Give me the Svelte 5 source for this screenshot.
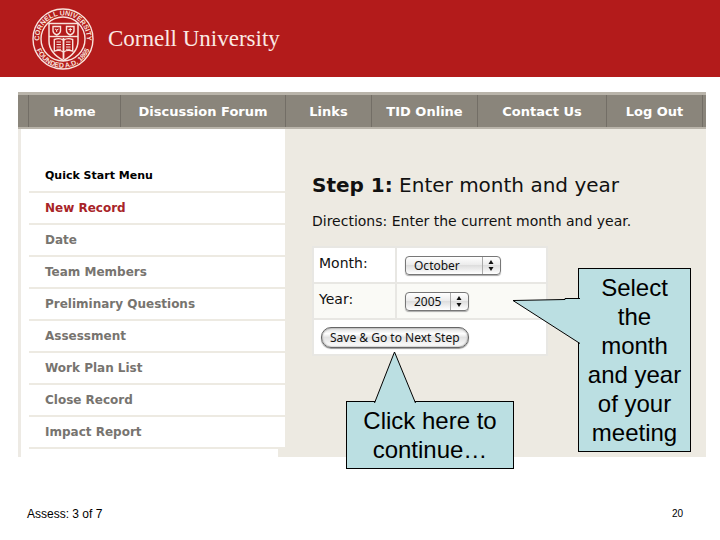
<script>
  const links = [
    { label: 'Home', share: 92 },
    { label: 'Discussion Forum', share: 165 },
    { label: 'Links', share: 86 },
    { label: 'TID Online', share: 106 },
    { label: 'Contact Us', share: 129 },
    { label: 'Log Out', share: 96 }
  ];
  const steps = [
    'New Record',
    'Date',
    'Team Members',
    'Preliminary Questions',
    'Assessment',
    'Work Plan List',
    'Close Record',
    'Impact Report'
  ];
  let current = $state('New Record');
  let month = $state('October');
  let year = $state('2005');
  const months = ['January', 'February', 'March', 'April', 'May', 'June', 'July', 'August', 'September', 'October', 'November', 'December'];
  const years = ['2004', '2005', '2006'];
</script>

{#snippet stepper()}
  <svg class="stepper" width="18" height="17" viewBox="0 0 18 17" aria-hidden="true">
    <path d="M.5 0V17" stroke="#aaa" />
    <path d="M9 3l2.5 4h-5zM9 14l2.5-4h-5z" fill="#111" />
  </svg>
{/snippet}

<div class="slide">
  <header>
    <svg class="seal" width="62" height="62" viewBox="0 0 62 62" fill="none" stroke="#f9e3dc" aria-hidden="true">
      <defs>
        <path id="arc-top" d="M9.5 41A23.7 23.7 0 1 1 52.5 41" />
        <path id="arc-bottom" d="M3 37A28.6 28.6 0 0 0 59 37" />
      </defs>
      <circle cx="31" cy="31" r="30" stroke-width="1.4" />
      <circle cx="31" cy="31" r="22" stroke-width="1.4" />
      <g class="motto" fill="#f9e3dc" stroke="none">
        <text text-anchor="middle"><textPath href="#arc-top" startOffset="50%">CORNELL UNIVERSITY</textPath></text>
        <text text-anchor="middle"><textPath href="#arc-bottom" startOffset="50%">FOUNDED A.D. 1865</textPath></text>
      </g>
      <path d="M17 15.5h29V33c0 9-5 14.5-14.5 19.5C22 47.5 17 42 17 33z" stroke-width="1.5" />
      <path d="M17 28.5h29" stroke-width="1.4" />
      <path d="M21 18.5h7.5v4.5c0 2-1.5 3-3.75 4-2.25-1-3.75-2-3.75-4zM34.5 18.5H42v4.5c0 2-1.5 3-3.75 4-2.25-1-3.75-2-3.75-4z" stroke-width="1.4" />
      <path d="M23 21l1.7 1 1.8-1M24.7 22v2M36.5 21.5h3.5M38.25 20v4" />
      <path d="M22.3 31.5c3.5-1.3 6.7-1 9.2.7 2.5-1.7 5.7-2 9.2-.7V43c-3.5-1-6.7-.7-9.2 1-2.5-1.7-5.7-2-9.2-1z" stroke-width="1.4" />
      <path d="M31.5 30v21" stroke-width="1.8" />
      <path d="M24.5 34H29M24.5 36.5H29M24.5 39H29M24.5 41.3H29M34 34h4.5M34 36.5h4.5M34 39h4.5M34 41.3h4.5" />
    </svg>
    <span class="brand">Cornell University</span>
  </header>

  <div class="site">
    <nav style:grid-template-columns={`10px ${links.map((l) => l.share + 'fr').join(' ')} 4px`}>
      <span></span>
      {#each links as link}
        <a href="#top">{link.label}</a>
      {/each}
      <span class="end"></span>
    </nav>

    <div class="columns">
      <aside>
        <h2>Quick Start Menu</h2>
        <ul>
          {#each steps as step}
            <li>
              <a href="#step" class:current={step === current} onclick={() => (current = step)}>{step}</a>
            </li>
          {/each}
        </ul>
        <div class="tail"></div>
      </aside>

      <main>
        <h1><strong>Step 1:</strong> Enter month and year</h1>
        <p class="directions">Directions: Enter the current month and year.</p>
        <form onsubmit={(e) => e.preventDefault()}>
          <table>
            <tbody>
              <tr>
                <th><label for="month">Month:</label></th>
                <td>
                  <span class="picker month">
                    <select id="month" bind:value={month}>
                      {#each months as m}<option>{m}</option>{/each}
                    </select>
                    {@render stepper()}
                  </span>
                </td>
              </tr>
              <tr class="alt">
                <th><label for="year">Year:</label></th>
                <td>
                  <span class="picker year">
                    <select id="year" bind:value={year}>
                      {#each years as y}<option>{y}</option>{/each}
                    </select>
                    {@render stepper()}
                  </span>
                </td>
              </tr>
              <tr>
                <td class="action" colspan="2"><button type="submit">Save &amp; Go to Next Step</button></td>
              </tr>
            </tbody>
          </table>
        </form>

        <div class="callout continue">
          <svg width="42" height="52" viewBox="0 0 42 52" aria-hidden="true">
            <path d="M.5 52L20.5 1L41.5 52" fill="#bbdfe2" stroke="#000" />
          </svg>
          Click here to continue…
        </div>
        <div class="callout select">
          <svg width="68" height="48" viewBox="0 0 68 48" aria-hidden="true">
            <path d="M68 1.5H53V2.5L1 3.5L68 46.5" fill="#bbdfe2" stroke="#000" />
          </svg>
          Select the month and year of your meeting
        </div>
      </main>
    </div>
  </div>

  <footer>
    <span>Assess: 3 of 7</span>
    <span class="page">20</span>
  </footer>
</div>

<style>
  :global(body) {
    margin: 0;
    background: #fff;
  }
  .slide {
    font-family: 'DejaVu Sans', Verdana, sans-serif;
    color: #111;
  }
  header {
    display: flex;
    align-items: center;
    gap: 14px;
    height: 77px;
    padding-left: 32px;
    background: #b31b1b;
  }
  .motto {
    font: bold 7px 'Liberation Sans', Arial, sans-serif;
  }
  .brand {
    font: 23px 'Liberation Serif', 'Times New Roman', serif;
    color: #fbe9e4;
  }
  .site {
    margin: 15px 14px 0 18px;
  }
  nav {
    display: grid;
    height: 32px;
    border-top: 3px solid #b9b4aa;
    border-bottom: 2px solid #b9b4aa;
    background: #8a857b;
  }
  nav a {
    display: flex;
    align-items: center;
    justify-content: center;
    border-left: 1px solid #736e66;
    font-size: 13px;
    font-weight: bold;
    white-space: nowrap;
    color: #fff;
    text-decoration: none;
  }
  nav .end {
    border-left: 1px solid #736e66;
  }
  .columns {
    display: grid;
    grid-template-columns: 267px 1fr;
    background: #edeae2;
  }
  aside {
    padding-top: 32px;
    border-left: 3px solid #edeae4;
    background: linear-gradient(#fff, #fff) no-repeat 0 0 / 100% calc(100% - 8px);
  }
  aside h2 {
    margin: 0 0 0 8px;
    padding-left: 16px;
    border-bottom: 2px solid #edeae2;
    font-size: 11px;
    line-height: 30px;
    color: #000;
  }
  ul {
    margin: 0 0 0 8px;
    padding: 0;
    list-style: none;
  }
  li {
    padding-left: 16px;
    border-bottom: 2px solid #edeae2;
    font-size: 12px;
    font-weight: bold;
    line-height: 30px;
  }
  li a {
    color: #77746f;
    text-decoration: none;
  }
  li a.current {
    color: #a82428;
  }
  .tail {
    height: 8px;
    margin-right: 7px;
    background: #fff;
  }
  main {
    position: relative;
    padding: 44px 0 0 27px;
  }
  h1 {
    margin: 0;
    font-size: 20px;
    font-weight: normal;
    line-height: 24px;
  }
  .directions {
    margin: 14px 0 15px;
    font-size: 14px;
    line-height: 20px;
  }
  table {
    width: 236px;
    border-spacing: 2px;
    background: #e8e7e3;
  }
  th,
  td {
    height: 34px;
    box-sizing: border-box;
    padding: 0;
    background: #fff;
  }
  .alt th,
  .alt td {
    background: #fafaf6;
  }
  th {
    width: 81px;
    padding: 5px 0 0 5px;
    vertical-align: top;
    text-align: left;
    font-size: 14px;
    font-weight: normal;
    line-height: 20px;
  }
  td {
    padding-left: 8px;
  }
  .picker {
    display: flex;
    position: relative;
  }
  .month {
    width: 96px;
  }
  .year {
    width: 64px;
  }
  select {
    appearance: none;
    width: 100%;
    height: 19px;
    margin: 0;
    padding: 0 8px;
    border: 1px solid #777;
    border-radius: 4px;
    background: linear-gradient(#fff, #ececec 45%, #dedede 50%, #fff);
    box-shadow: 0 1px 1px #aaa;
    font: 12px/17px 'Noto Sans', sans-serif;
    color: #111;
  }
  .stepper {
    position: absolute;
    top: 1px;
    right: 1px;
    pointer-events: none;
  }
  .action {
    padding-left: 7px;
  }
  button {
    display: block;
    height: 21px;
    padding: 0 8px;
    border: 1px solid #666;
    border-radius: 10px;
    background: linear-gradient(#ddd, #fff 30%, #e2e2e2 50%, #fff);
    box-shadow: inset 0 0 2px #777, 0 1px 1px #999;
    font: 12px/17px 'Noto Sans', sans-serif;
    color: #111;
  }
  .callout {
    position: absolute;
    box-sizing: border-box;
    padding: 4px 8px;
    border: 1px solid #000;
    background: #bbdfe2;
    font: 24px/29px 'Liberation Sans', Arial, sans-serif;
    text-align: center;
    color: #000;
  }
  .callout svg {
    position: absolute;
  }
  .continue {
    top: 272px;
    left: 61px;
    width: 168px;
  }
  .continue svg {
    left: 27px;
    bottom: 100%;
    margin-bottom: -1px;
  }
  .select {
    top: 139px;
    left: 293px;
    width: 113px;
  }
  .select svg {
    right: 100%;
    top: 28px;
    margin-right: -1px;
  }
  footer {
    display: flex;
    justify-content: space-between;
    align-items: center;
    margin-top: 48px;
    padding: 0 37px 0 27px;
    font: 12px/18px 'Liberation Sans', Arial, sans-serif;
    color: #000;
  }
  .page {
    font-size: 10px;
  }
</style>
